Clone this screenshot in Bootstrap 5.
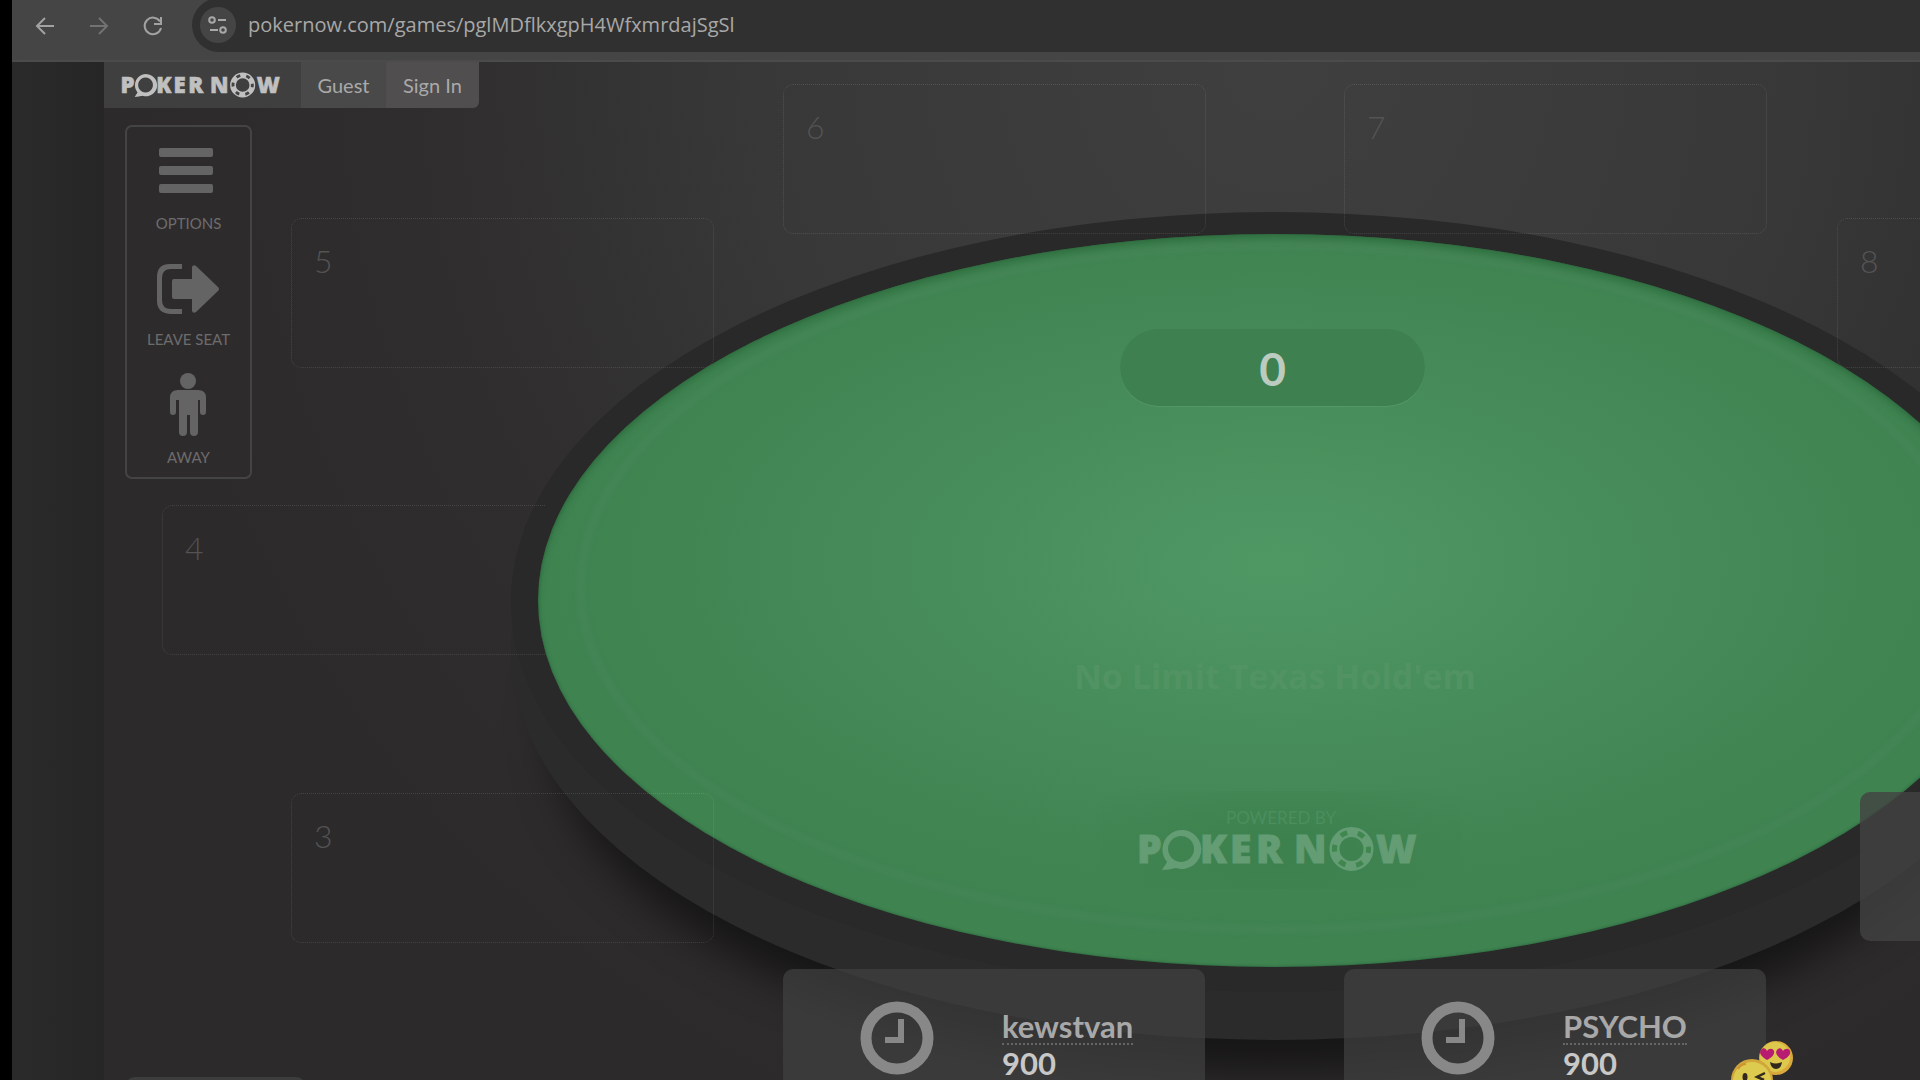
<!DOCTYPE html>
<html lang="en">
<head>
<meta charset="utf-8">
<meta name="viewport" content="width=device-width, initial-scale=1">
<title>Poker Now</title>
<link rel="stylesheet" href="https://cdn.jsdelivr.net/npm/bootstrap@5.3.0/dist/css/bootstrap.min.css">
<style>
body { background: #000; font-family: Lato, "Open Sans", sans-serif; color: #a5a5a5; padding-left: 12px; }
.browser-bar { height: 62px; background: #454545; border-bottom: 2px solid #4b4b4b; padding-left: 18px; }
.nav-icon { width: 30px; height: 30px; margin-right: 24px; color: #a2a2a2; }
.nav-icon:disabled { color: #727272; opacity: 1; border: 0; }
.nav-icon svg, .tune svg { display: block; fill: none; stroke: currentColor; stroke-width: 2; }
.omnibox { height: 54px; margin-top: -2px; background: #303030; border-radius: 27px 0 0 27px; padding-left: 8px; }
.tune { width: 36px; height: 36px; margin-right: 12px; background: #454545; color: #a8a8a8; }
.address { font: 20px/28px "Open Sans", sans-serif; color: #a8a8a8; background: none; border: 0; outline: 0; padding: 0; }
.gutter { width: 92px; background: linear-gradient(90deg, #2a2a2a, #252625); }
.felt-room { background: radial-gradient(circle 1150px at 1171px 0, #3f3f3f 0, #383838 45%, #2f2d2e 75%, #2c2a2b 100%); }
.site-nav { height: 46px; width: max-content; border-radius: 0 0 6px 0; overflow: hidden; font-size: 20px; line-height: 28px; }
.site-nav a { color: #a9a9a9; text-decoration: none; }
.brand { width: 197px; background: #3f3f3f; }
.guest { width: 85px; background: #4a4949; }
.signin { width: 93px; background: #504e4e; }
.logo { display: block; fill: currentColor; font-family: "Open Sans", sans-serif; font-weight: 800; overflow: visible; }
.logo text { stroke: currentColor; stroke-width: 1; }
.tools { width: 127px; height: 354px; margin: 17px 0 0 21px; padding-top: 21px; border: 2px solid #454445; border-radius: 7px; background: #2d2b2c; z-index: 2; }
.tool { color: #6d6c6d; font-size: 15px; line-height: 20px; }
.tool svg { display: block; fill: #656465; }
.tool + .tool { margin-top: 30px; }
.tool:last-child { margin-top: 24px; }
.tool span { margin-top: 18px; }
.tool + .tool span { margin-top: 14px; }
.tool:last-child span { margin-top: 10px; }
.seat { position: absolute; width: 423px; height: 150px; border: 1px dotted rgba(255,255,255,.12); border-radius: 10px; padding: 20px 22px; font-size: 32px; font-weight: 300; line-height: 44px; color: #545354; }
.rim, .felt, .felt-line, .pot, .caption, .sponsor, .player, .emote, .peek { position: absolute; }
.rim { left: 407px; top: 150px; width: 1528px; height: 780px; border-radius: 50%; background: #292929; box-shadow: 0 48px 0 #2b2b2b, 0 120px 40px -40px rgba(0,0,0,.5); }
.felt { left: 434px; top: 172px; width: 1474px; height: 733px; border-radius: 50%; background: radial-gradient(ellipse 50% 50% at 50% 45%, #4f9864 0, #478d5b 45%, #418553 80%, #3f8351 100%); box-shadow: inset 0 6px 6px rgba(40,100,55,.45), inset 0 0 3px rgba(20,60,30,.5); }
.felt-line { left: 472px; top: 178px; width: 1398px; height: 694px; border-radius: 50%; border: 9px solid rgba(110,150,115,.1); filter: blur(2px); }
.pot { left: 1016px; top: 267px; width: 305px; height: 77px; border-radius: 39px; background: #3e8050; color: #bccbbf; font-size: 46px; line-height: 80px; font-weight: 700; box-shadow: 0 1px 1px rgba(140,200,150,.2); }
.caption { left: 871px; top: 590px; width: 600px; font-family: "Open Sans", sans-serif; font-size: 34px; line-height: 48px; font-weight: 700; color: #529363; }
.sponsor { left: 997px; top: 729px; width: 360px; height: 98px; background: radial-gradient(ellipse 60% 90%, rgba(50,120,65,.35), rgba(50,120,65,0)); color: #649c74; }
.powered { font-size: 17px; line-height: 20px; color: #4c8e5d; padding-top: 17px; }
.player { width: 422px; height: 150px; top: 907px; border-radius: 10px; background: rgba(66,66,66,.7); }
.player-box { padding: 30px 0 0 77px; }
.clock { width: 74px; height: 74px; margin-right: 68px; margin-top: 2px; fill: none; stroke: #888; }
.who-box { font-size: 31px; line-height: 34px; font-weight: 700; padding-top: 10px; }
.who { color: #a9a8a9; text-decoration: none; border-bottom: 2px dotted #666; }
.chips { color: #c8c8c8; line-height: 36px; }
.peek { background: rgba(66,66,66,.8); border-radius: 10px; }
</style>
</head>
<body class="vh-100 d-flex flex-column overflow-hidden">
<header class="browser-bar d-flex align-items-start flex-shrink-0">
  <div class="d-flex align-items-center flex-grow-1">
    <button class="nav-icon btn p-0 border-0" aria-label="Back"><svg width="30" height="30" viewBox="0 0 30 30"><path d="M24 15H7M15 7l-8 8 8 8"/></svg></button>
    <button class="nav-icon btn p-0 border-0" aria-label="Forward" disabled><svg width="30" height="30" viewBox="0 0 30 30"><path d="M6 15h17M15 7l8 8-8 8"/></svg></button>
    <button class="nav-icon btn p-0 border-0" aria-label="Reload"><svg width="30" height="30" viewBox="0 0 30 30"><path d="M22 10.500A8.300 8.300 0 1 0 23 17M23 6v7h-7"/></svg></button>
    <div class="omnibox d-flex align-items-center flex-grow-1">
      <button class="tune btn p-0 border-0 rounded-circle d-flex align-items-center justify-content-center" aria-label="Site information"><svg width="22" height="22" viewBox="0 0 22 22"><circle cx="5" cy="6" r="2.800"/><path d="M11 6h8M3 16h8"/><circle cx="16" cy="16" r="2.800"/></svg></button>
      <input class="address flex-grow-1" aria-label="Address" value="pokernow.com/games/pglMDflkxgpH4WfxmrdajSgSl">
    </div>
  </div>
</header>
<div class="d-flex flex-grow-1 overflow-hidden">
  <div class="gutter flex-shrink-0"></div>
  <main class="felt-room flex-grow-1 position-relative overflow-hidden">
    <div class="rim"></div>
    <div class="felt"></div>
    <div class="felt-line"></div>
    <div class="seat" style="left:679px;top:22px">6</div>
    <div class="seat" style="left:1240px;top:22px">7</div>
    <div class="seat" style="left:187px;top:156px">5</div>
    <div class="seat" style="left:1733px;top:156px">8</div>
    <div class="seat" style="left:58px;top:443px;clip-path:inset(0 40px 0 0)">4</div>
    <div class="seat" style="left:187px;top:731px">3</div>
    <div class="pot text-center">0</div>
    <div class="caption text-center">No Limit Texas Hold'em</div>
    <div class="sponsor d-flex flex-column align-items-center">
      <div class="powered">POWERED BY</div>
      <svg class="logo" width="286" height="42" viewBox="0 0 286 42"><g font-size="39"><text x="-1" y="35">P</text><text x="62 92 118" y="35">KER</text><text x="156" y="35">N</text><text x="238" y="35">W</text></g><path fill-rule="evenodd" d="M24 42l5-8A19.500 19.500 0 1 1 38 40Q31 42 24 42zM43 8a13 13 0 1 0 .1 0z"/><circle cx="213.500" cy="21" r="17" fill="none" stroke="currentColor" stroke-width="10"/><circle cx="213.500" cy="21" r="17" fill="none" stroke="#40864f" stroke-width="5" stroke-dasharray="7 10.800" stroke-dashoffset="3"/></svg>
    </div>
    <section class="player" style="left:679px"><div class="player-box d-flex">
      <svg class="clock" viewBox="0 0 74 74"><circle cx="37" cy="37" r="31" stroke-width="11"/><path d="M41 18v21H25" stroke-width="6"/></svg>
      <div class="who-box d-flex flex-column align-items-start"><a class="who" href="#">kewstvan</a><div class="chips">900</div></div>
    </div></section>
    <section class="player" style="left:1240px"><div class="player-box d-flex">
      <svg class="clock" viewBox="0 0 74 74"><circle cx="37" cy="37" r="31" stroke-width="11"/><path d="M41 18v21H25" stroke-width="6"/></svg>
      <div class="who-box d-flex flex-column align-items-start"><a class="who" href="#">PSYCHO</a><div class="chips">900</div></div>
    </div></section>
    <div class="peek" style="left:1756px;top:730px;width:423px;height:149px"></div>
    <div class="peek" style="left:21px;top:1015px;width:181px;height:40px"></div>
    <svg class="emote" style="left:1624px;top:978px" width="68" height="62" viewBox="0 0 68 62">
      <circle cx="48" cy="18" r="17" fill="#d9a93c"/><circle cx="47" cy="17" r="15" fill="#dcc84c"/>
      <g fill="#b71c72"><path d="M39 20c-7-4-8-8-6-10 2-3 5-2 6 1 2-3 6-3 7 0 1 4-3 7-7 9z"/><path d="M55 20c-7-4-8-8-6-10 2-3 5-2 6 1 2-3 6-3 7 0 1 4-3 7-7 9z"/></g>
      <path d="M42 22q6 3 12 0-1 7-6 7t-6-7z" fill="#332a1d"/>
      <circle cx="24" cy="40" r="21" fill="#d0a53a"/><circle cx="24" cy="41" r="19" fill="#dccb4e"/>
      <ellipse cx="17" cy="37" rx="2.500" ry="4" fill="#332a1d"/><path d="M37 33l-8 4 7 3" fill="none" stroke="#332a1d" stroke-width="2.500"/><path d="M10 29q3-5 8-5" fill="none" stroke="#cf9232" stroke-width="2"/>
    </svg>
    <nav class="site-nav d-flex position-relative">
      <a class="brand d-flex align-items-center justify-content-center" href="#" aria-label="Poker Now" style="color:#c0c0c0"><svg class="logo" width="163" height="24" viewBox="0 0 286 42"><g font-size="39"><text x="-1" y="35">P</text><text x="62 92 118" y="35">KER</text><text x="156" y="35">N</text><text x="238" y="35">W</text></g><path fill-rule="evenodd" d="M24 42l5-8A19.500 19.500 0 1 1 38 40Q31 42 24 42zM43 8a13 13 0 1 0 .1 0z"/><circle cx="213.500" cy="21" r="17" fill="none" stroke="currentColor" stroke-width="10"/><circle cx="213.500" cy="21" r="17" fill="none" stroke="#444" stroke-width="5" stroke-dasharray="7 10.800" stroke-dashoffset="3"/></svg></a>
      <a class="guest d-flex align-items-center justify-content-center" href="#">Guest</a>
      <a class="signin d-flex align-items-center justify-content-center" href="#">Sign In</a>
    </nav>
    <div class="tools position-relative d-flex flex-column align-items-center">
      <button class="tool btn p-0 border-0 d-flex flex-column align-items-center"><svg width="58" height="47" viewBox="0 0 58 47"><rect width="54" height="9" rx="2"/><rect y="18" width="54" height="9" rx="2"/><rect y="36" width="54" height="9" rx="2"/></svg><span>OPTIONS</span></button>
      <button class="tool btn p-0 border-0 d-flex flex-column align-items-center"><svg width="66" height="52" viewBox="0 0 66 52"><path d="M26 1v5H15q-9 0-9 9v22q0 9 9 9h11v5H14Q1 50 1 38V14Q1 1 14 1z"/><path d="M18 16h18V4q1-3 4-1l22 21q2 2 0 4L40 49q-3 2-4-1V36H18q-2 0-2-2V18q0-2 2-2z"/></svg><span>LEAVE SEAT</span></button>
      <button class="tool btn p-0 border-0 d-flex flex-column align-items-center"><svg width="40" height="64" viewBox="0 0 40 64"><circle cx="19" cy="8" r="8"/><path d="M9 17h20q8 0 8 8v14q0 3-3 3t-3-3V27h-2v32q0 4-4 4t-4-4V42h-3v17q0 4-4 4t-4-4V27H7v12q0 3-3 3t-3-3V25q0-8 8-8z"/></svg><span>AWAY</span></button>
    </div>
  </main>
</div>
<script src="https://cdn.jsdelivr.net/npm/bootstrap@5.3.0/dist/js/bootstrap.bundle.min.js"></script>
</body>
</html>
